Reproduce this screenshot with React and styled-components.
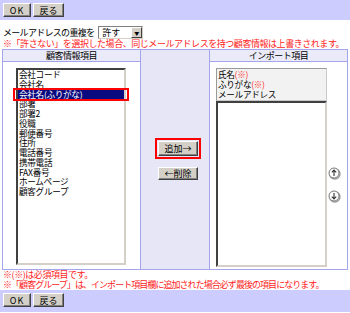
import React from 'react'
import styled, { createGlobalStyle } from 'styled-components'

const GlobalStyle = createGlobalStyle`
  html, body {
    margin: 0;
    padding: 0;
    background: #ffffff;
  }
  body {
    width: 350px;
    font-family: "Noto Sans CJK JP", "Noto Sans", sans-serif;
    font-size: 9px;
    color: #000000;
  }
`

const Page = styled.div`
  width: 350px;
  height: 313px;
  overflow: hidden;
`

const ButtonBar = styled.div`
  display: flex;
  gap: 2px;
  height: ${({ bottom }) => (bottom ? '22px' : '20px')};
  box-sizing: border-box;
  padding: 3px 3px;
  background: #ccccff;
`

const Button = styled.button`
  width: ${({ w }) => w}px;
  height: ${({ h }) => h || 14}px;
  padding: 0;
  margin: 0;
  box-sizing: border-box;
  background: #d4d0c8;
  border: 1px solid;
  border-color: #ffffff #404040 #404040 #ffffff;
  box-shadow: inset -1px -1px 0 #808080;
  font-family: "Noto Sans CJK JP", sans-serif;
  font-size: 9px;
  line-height: 1;
  letter-spacing: ${({ ls }) => ls || 0}px;
  color: #000000;
  outline: ${({ marked }) => (marked ? '2px solid #ff0000' : 'none')};
  outline-offset: 1px;
`

const MailRow = styled.div`
  display: flex;
  align-items: center;
  height: 13px;
  margin-top: 6px;
  padding-left: 3px;
  letter-spacing: -0.7px;
  line-height: 13px;
`

const Select = styled.div`
  display: flex;
  align-items: stretch;
  width: 45px;
  height: 13px;
  margin-left: 4px;
  box-sizing: border-box;
  border: 1px solid;
  border-color: #808080 #d4d0c8 #d4d0c8 #808080;
  background: #ffffff;
  letter-spacing: 0;
`

const SelectText = styled.span`
  flex: 1;
  padding-left: 3px;
  line-height: 11px;
`

const SelectArrow = styled.span`
  width: 11px;
  box-sizing: border-box;
  background: #d4d0c8;
  border: 1px solid;
  border-color: #ffffff #404040 #404040 #ffffff;
  display: flex;
  align-items: center;
  justify-content: center;
  font-size: 5px;
  line-height: 1;
`

const Note = styled.div`
  color: #ff1a1a;
  height: 10px;
  line-height: 10px;
  padding-left: 3px;
  white-space: nowrap;
  letter-spacing: ${({ ls }) => ls}px;
`

const Table = styled.div`
  display: grid;
  grid-template-columns: 137px 68px 137px;
  grid-template-rows: 11px 207px;
  gap: 1px;
  padding: 1px;
  width: 346px;
  box-sizing: border-box;
  margin-left: 2px;
  background: #a5a5ee;
`

const HeadCell = styled.div`
  background: #eaeaf8;
  text-align: center;
  line-height: 11px;
  letter-spacing: -0.5px;
`

const MiddleCell = styled.div`
  grid-row: 1 / span 2;
  grid-column: 2;
  background: #e6e6f6;
  display: flex;
  flex-direction: column;
  align-items: center;
  justify-content: center;
  gap: 11px;
  padding-left: 6px;
  padding-top: 2px;
`

const BodyCell = styled.div`
  background: #ffffff;
  display: flex;
  padding: 6px 0 0 ${({ pl }) => pl}px;
`

const ListBox = styled.div`
  position: relative;
  width: ${({ w }) => w}px;
  height: ${({ h }) => h}px;
  box-sizing: border-box;
  border: 2px solid;
  border-color: #404040 #d4d0c8 #d4d0c8 #404040;
  background: #ffffff;
`

const Item = styled.div`
  position: relative;
  height: 9.75px;
  line-height: 9.75px;
  padding-left: 1px;
  font-size: 8.6px;
  white-space: nowrap;
  letter-spacing: -0.3px;
  color: ${({ selected }) => (selected ? '#ffffff' : '#000000')};
  background: ${({ selected }) => (selected ? '#0a0a80' : 'transparent')};
  z-index: ${({ selected }) => (selected ? 1 : 0)};
`

const SelectMark = styled.span`
  position: absolute;
  left: -5px;
  right: -5px;
  top: -2px;
  bottom: -2px;
  border: 2px solid #ff0000;
`

const RightStack = styled.div`
  display: flex;
  flex-direction: column;
`

const FixedBox = styled.div`
  width: 111px;
  height: 33px;
  box-sizing: border-box;
  border: 1px solid;
  border-color: #9a9a9a #c8c8c8 #c8c8c8 #9a9a9a;
  background: #f2f2f2;
  padding-top: 1px;
`

const Required = styled.span`
  color: #ff3030;
`

const ArrowColumn = styled.div`
  display: flex;
  flex-direction: column;
  gap: 10px;
  margin-top: 99px;
  margin-left: 1px;
`

const ArrowIcon = ({ down }) => (
  <svg width="13" height="13" viewBox="0 0 13 13">
    <circle cx="6.8" cy="6.8" r="5.2" fill="none" stroke="#9a9a9a" strokeWidth="1.4" />
    <circle cx="6" cy="6" r="5" fill="#ffffff" stroke="#7a7a7a" strokeWidth="1" />
    {down ? (
      <path d="M6 3 V9 M3.8 6.6 L6 9 L8.2 6.6" fill="none" stroke="#303030" strokeWidth="1.1" />
    ) : (
      <path d="M6 9 V3 M3.8 5.4 L6 3 L8.2 5.4" fill="none" stroke="#303030" strokeWidth="1.1" />
    )}
  </svg>
)

const customerFields = [
  '会社コード',
  '会社名',
  '会社名(ふりがな)',
  '部署',
  '部署2',
  '役職',
  '郵便番号',
  '住所',
  '電話番号',
  '携帯電話',
  'FAX番号',
  'ホームページ',
  '顧客グループ',
]

const App = () => {
  return (
    <Page>
      <GlobalStyle />
      <ButtonBar>
        <Button w={28} ls={1}>OK</Button>
        <Button w={31}>戻る</Button>
      </ButtonBar>
      <MailRow>
        メールアドレスの重複を
        <Select>
          <SelectText>許す</SelectText>
          <SelectArrow>▼</SelectArrow>
        </Select>
      </MailRow>
      <Note ls={-0.45}>※「許さない」を選択した場合、同じメールアドレスを持つ顧客情報は上書きされます。</Note>
      <Table>
        <HeadCell>顧客情報項目</HeadCell>
        <MiddleCell>
          <Button w={40} h={15} marked>追加→</Button>
          <Button w={40} h={13}>←削除</Button>
        </MiddleCell>
        <HeadCell>インポート項目</HeadCell>
        <BodyCell pl={13}>
          <ListBox w={110} h={197}>
            {customerFields.map((f, i) => (
              <Item key={f} selected={i === 2}>
                {i === 2 && <SelectMark />}
                {f}
              </Item>
            ))}
          </ListBox>
        </BodyCell>
        <BodyCell pl={6}>
          <RightStack>
            <FixedBox>
              <Item>氏名<Required>(※)</Required></Item>
              <Item>ふりがな<Required>(※)</Required></Item>
              <Item>メールアドレス</Item>
            </FixedBox>
            <ListBox w={111} h={166} />
          </RightStack>
          <ArrowColumn>
            <ArrowIcon />
            <ArrowIcon down />
          </ArrowColumn>
        </BodyCell>
      </Table>
      <Note ls={-0.45}>※(※)は必須項目です。</Note>
      <Note ls={-0.95}>※「顧客グループ」は、インポート項目欄に追加された場合必ず最後の項目になります。</Note>
      <ButtonBar bottom>
        <Button w={28} ls={1}>OK</Button>
        <Button w={31}>戻る</Button>
      </ButtonBar>
    </Page>
  )
}

export default App
